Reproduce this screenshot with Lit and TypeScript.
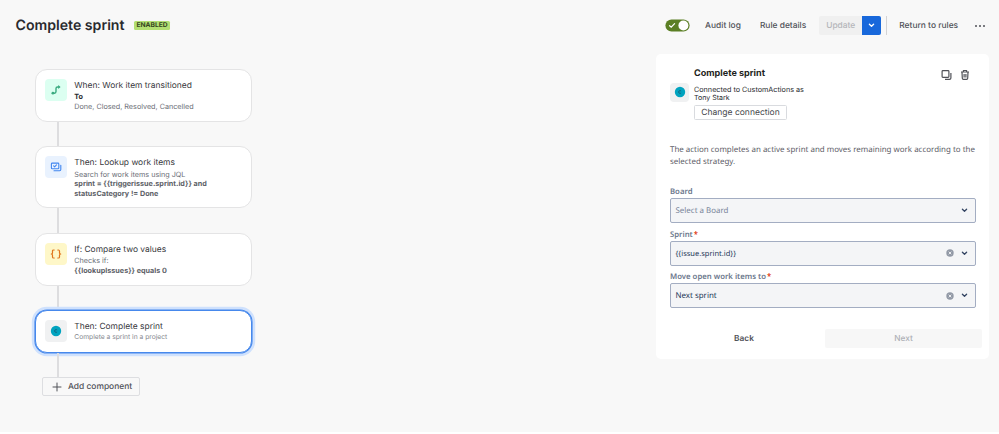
import { LitElement, html, css, svg, nothing, TemplateResult } from "lit";
import { customElement, property } from "lit/decorators.js";
import { classMap } from "lit/directives/class-map.js";

const base = css`
  * { box-sizing: border-box; }
  :host {
    font-family: Inter, "Liberation Sans", sans-serif;
    text-rendering: geometricPrecision;
    color: #292a2e;
  }
  svg { display: block; }
`;

const chevron = (color: string) => html`<svg width="7" height="5" viewBox="0 0 7 5" fill="none" stroke=${color} stroke-width="1.3" stroke-linecap="round" stroke-linejoin="round">${svg`<path d="M1.4 1.2 3.5 3.3 5.6 1.2" />`}</svg>`;

const customIcon = html`<svg width="12" height="12" viewBox="0 0 12 12">
  <circle cx="6" cy="6" r="5.2" fill="#00a3bf" />
  <path d="M7.1 5.1A1.4 1.4 0 1 0 7.1 6.9" fill="none" stroke="#17607a" stroke-width="0.9" />
</svg>`;

const icons: Record<string, TemplateResult> = {
  transition: html`<svg width="12" height="12" viewBox="0 0 12 12" fill="none" stroke="#3bab80" stroke-width="1.4" stroke-linecap="round">
    <path d="M3.2 9.2H4.4Q6 9.2 6 7.6V4.5Q6 3 7.6 3H9" />
    <circle cx="2.9" cy="9.2" r="1.4" fill="#3bab80" stroke="none" />
    <path d="M8.2 1.1 10.6 3 8.2 4.9Z" fill="#3bab80" stroke="none" />
  </svg>`,
  lookup: html`<svg width="12" height="12" viewBox="0 0 12 12" fill="none" stroke="#4186f0" stroke-width="1.1" stroke-linecap="round" stroke-linejoin="round">
    <rect x="1.4" y="2.1" width="7.4" height="5.6" rx="0.8" />
    <path d="M3.6 4.9 4.6 5.8 6.5 3.8M10.8 4.3V8.5Q10.8 9.7 9.6 9.7H4" />
  </svg>`,
  compare: html`<svg width="12" height="12" viewBox="0 0 12 12" fill="none" stroke="#e0751c" stroke-width="1.2" stroke-linecap="round" stroke-linejoin="round">
    <path d="M4.2 2H3.6Q2.5 2 2.5 3.1V4.8Q2.5 6 1.3 6Q2.5 6 2.5 7.2V8.9Q2.5 10 3.6 10H4.2M7.8 2H8.4Q9.5 2 9.5 3.1V4.8Q9.5 6 10.7 6Q9.5 6 9.5 7.2V8.9Q9.5 10 8.4 10H7.8" />
  </svg>`,
  custom: customIcon,
};

@customElement("rule-card")
class RuleCard extends LitElement {
  @property() icon = "custom";
  @property() heading = "";
  @property({ type: Array }) lines: { text: string; kind: string }[] = [];
  @property({ type: Boolean }) selected = false;

  static styles = [base, css`
    :host { display: block; }
    .card {
      display: flex;
      gap: 7px;
      height: 100%;
      padding: 9.2px 9px 0 9.3px;
      background: #fff;
      border: 1px solid #e4e4e5;
      border-radius: 12px;
    }
    .card.selected {
      border-color: #4688ec;
      box-shadow: 0 0 0 0.6px #4688ec, 0 0 0 3.2px #cfe1fd;
    }
    .tile {
      display: grid;
      place-items: center;
      flex: none;
      width: 22px;
      height: 22px;
      border-radius: 4px;
    }
    .transition { background: #dcfff1; }
    .lookup { background: #e9f2fe; }
    .compare { background: #fef7c8; }
    .custom { background: #f0f1f2; }
    .text { padding-top: 0.7px; }
    .heading { margin-bottom: 0.5px; font-size: 8.43px; line-height: 12px; color: #36373b; }
    .line { font-size: 7.23px; line-height: 9.6px; white-space: nowrap; color: #6b6e76; }
    .strong { font-weight: 700; color: #5d5f67; }
    .label { font-weight: 700; color: #292a2e; }
    .small { font-size: 6.69px; color: #85878e; }
  `];

  render() {
    return html`<div class=${classMap({ card: true, selected: this.selected })}>
      <div class="tile ${this.icon}">${icons[this.icon]}</div>
      <div class="text">
        <div class="heading">${this.heading}</div>
        ${this.lines.map((l) => html`<div class="line ${l.kind}">${l.text}</div>`)}
      </div>
    </div>`;
  }
}

@customElement("select-field")
class SelectField extends LitElement {
  @property() label = "";
  @property() value = "";
  @property({ type: Boolean }) required = false;
  @property({ type: Boolean }) placeholder = false;

  static styles = [base, css`
    :host {
      display: block;
      height: 42.5px;
      font-family: "Noto Sans", "Open Sans", sans-serif;
    }
    .label { height: 13px; line-height: 14px; font-size: 7.75px; font-weight: 600; color: #6b778c; white-space: nowrap; }
    .star { margin-left: 1px; color: #de350b; }
    .control {
      display: flex;
      align-items: center;
      gap: 6.5px;
      width: 305.5px;
      height: 25px;
      padding: 0 7px 0 4.5px;
      background: #f4f5f7;
      border: 1px solid #a3adc2;
      border-radius: 2px;
      font-size: 7.93px;
      color: #253858;
    }
    .value { flex: 1; padding-top: 1px; }
    .templated { font-size: 7.5px; }
    .placeholder { color: #7a869a; }
  `];

  render() {
    return html`
      <div class="label">${this.label}${this.required ? html`<span class="star">*</span>` : nothing}</div>
      <div class="control">
        <span class=${classMap({ value: true, placeholder: this.placeholder, templated: this.value.startsWith("{{") })}>${this.value}</span>
        ${this.placeholder ? nothing : html`<svg width="8" height="8" viewBox="0 0 8 8">
          <circle cx="4" cy="4" r="3.7" fill="#9299a6" />
          <path d="M2.7 2.7 5.3 5.3M5.3 2.7 2.7 5.3" stroke="#f4f5f7" stroke-width="0.9" />
        </svg>`}
        ${chevron("#344563")}
      </div>`;
  }
}

@customElement("app-root")
class AppRoot extends LitElement {
  static styles = [base, css`
    :host { display: block; height: 434px; overflow: hidden; background: #fff; }
    .page { height: 432px; background: #f8f8f8; }
    .header {
      display: flex;
      align-items: center;
      height: 51px;
      padding: 0 13.4px 0 15.5px;
      font-size: 8.42px;
      font-weight: 500;
      color: #505258;
      white-space: nowrap;
    }
    .title { font-size: 14.13px; font-weight: 600; color: #292a2e; line-height: 18px; }
    .badge {
      margin: 0 auto 0 9.5px;
      padding: 0 2.4px;
      height: 9.4px;
      line-height: 9.6px;
      border-radius: 1.5px;
      background: #b3df72;
      color: #37471f;
      font-size: 6.7px;
      font-weight: 700;
    }
    .audit { margin-left: 15px; }
    .details { margin-left: 19px; }
    .update {
      display: grid;
      place-items: center;
      width: 43px;
      height: 19px;
      margin-left: 13px;
      background: #f0f0f0;
      color: #b5b6ba;
      border-radius: 2px 0 0 2px;
    }
    .split {
      display: grid;
      place-items: center;
      width: 19px;
      height: 19px;
      background: #1868db;
      border-radius: 0 2px 2px 0;
    }
    .rule { width: 1px; height: 19px; margin: 0 12px 0 5px; background: #d3d3d5; }
    .more { margin-left: 15.5px; }
    .body { display: flex; justify-content: space-between; align-items: flex-start; padding: 0 10px 0 35px; }
    .flow { width: 217px; padding-top: 17.7px; }
    .link { width: 1.5px; margin-left: 22.3px; background: #dddddf; }
    .h1 { height: 53px; } .h2 { height: 62px; } .h3 { height: 53px; } .h4 { height: 43.5px; }
    .l1 { height: 24.5px; } .l2 { height: 24.5px; } .l3 { height: 24px; } .l4 { height: 23.8px; }
    .add {
      display: flex;
      align-items: center;
      gap: 6px;
      width: 97.5px;
      height: 19.5px;
      margin-left: 7.4px;
      padding-left: 8.5px;
      border: 1px solid #dddee1;
      border-radius: 2px;
      font-size: 8.43px;
      font-weight: 500;
      color: #505258;
      white-space: nowrap;
    }
    .panel { width: 333px; height: 305px; margin-top: 3px; padding: 13px 14px 0; background: #fff; border-radius: 5px; }
    .top { display: flex; height: 53px; }
    .tile { display: grid; place-items: center; width: 19px; height: 19px; margin: 15.5px 5px 0 0; border-radius: 4px; background: #f0f1f2; }
    .info { flex: 1; padding-top: 1px; }
    .name { font-size: 9.08px; line-height: 12px; font-weight: 700; color: #1e1f21; }
    .conn { margin-top: 5.5px; font-size: 7.23px; line-height: 8px; color: #292a2e; }
    .who { font-size: 7.05px; line-height: 8px; color: #292a2e; }
    .change {
      display: grid;
      place-items: center;
      width: 93px;
      height: 15px;
      margin-top: 3.2px;
      padding-top: 1px;
      border: 1px solid #d9dbdf;
      border-radius: 1.5px;
      font-size: 8.52px;
      color: #44464b;
    }
    .tools { display: flex; gap: 8px; margin: 2px 5px 0 0; align-self: flex-start; }
    .desc {
      height: 40px;
      margin-top: 25px;
      font: 7.94px/11.6px "Noto Sans", "Open Sans", sans-serif;
      color: #5e6068;
      white-space: nowrap;
    }
    .actions { display: flex; height: 19px; margin: 16.5px -7px 0 -7px; font-size: 8.3px; }
    .back, .next { flex: 1; display: grid; place-items: center; padding-top: 1px; }
    .back { font-weight: 600; color: #505258; }
    .next { flex: none; width: 157px; background: #f7f7f7; color: #aeb0b6; font-weight: 500; border-radius: 2px; }
  `];

  render() {
    return html`<div class="page">
      <div class="header">
        <span class="title">Complete sprint</span>
        <span class="badge">ENABLED</span>
        <svg width="25" height="13" viewBox="0 0 25 13">
          <rect x="0.4" y="0.4" width="24.2" height="12.2" rx="6.1" fill="#5b7f24" />
          <circle cx="18.4" cy="6.5" r="5" fill="#fff" />
          <path d="M4.6 6.7 6.2 8.2 9.6 4.7" fill="none" stroke="#fff" stroke-width="1.2" stroke-linecap="round" />
        </svg>
        <span class="audit">Audit log</span>
        <span class="details">Rule details</span>
        <span class="update">Update</span>
        <span class="split">${chevron("#fff")}</span>
        <span class="rule"></span>
        <span>Return to rules</span>
        <svg class="more" width="12" height="4" viewBox="0 0 12 4" fill="#505258">
          <circle cx="2" cy="2" r="1" /><circle cx="6" cy="2" r="1" /><circle cx="10" cy="2" r="1" />
        </svg>
      </div>
      <div class="body">
        <div class="flow">
          <rule-card class="h1" icon="transition" heading="When: Work item transitioned"
            .lines=${[{ text: "To", kind: "label" }, { text: "Done, Closed, Resolved, Cancelled", kind: "" }]}></rule-card>
          <div class="link l1"></div>
          <rule-card class="h2" icon="lookup" heading="Then: Lookup work items"
            .lines=${[
              { text: "Search for work items using JQL", kind: "" },
              { text: "sprint = {{triggerissue.sprint.id}} and", kind: "strong" },
              { text: "statusCategory != Done", kind: "strong" },
            ]}></rule-card>
          <div class="link l2"></div>
          <rule-card class="h3" icon="compare" heading="If: Compare two values"
            .lines=${[{ text: "Checks if:", kind: "" }, { text: "{{lookupIssues}} equals 0", kind: "strong" }]}></rule-card>
          <div class="link l3"></div>
          <rule-card class="h4" icon="custom" heading="Then: Complete sprint" selected
            .lines=${[{ text: "Complete a sprint in a project", kind: "small" }]}></rule-card>
          <div class="link l4"></div>
          <div class="add">
            <svg width="10" height="10" viewBox="0 0 10 10" fill="none" stroke="#505258" stroke-width="1" stroke-linecap="round"><path d="M5 1V9M1 5H9" /></svg>
            Add component
          </div>
        </div>
        <div class="panel">
          <div class="top">
            <div class="tile">${customIcon}</div>
            <div class="info">
              <div class="name">Complete sprint</div>
              <div class="conn">Connected to CustomActions as</div>
              <div class="who">Tony Stark</div>
              <div class="change">Change connection</div>
            </div>
            <div class="tools">
              <svg width="11" height="12" viewBox="0 0 11 12" fill="none" stroke="#505258" stroke-width="1.2" stroke-linejoin="round">
                <rect x="1.1" y="1.6" width="6.8" height="6.8" rx="0.8" />
                <path d="M9.9 4V9Q9.9 10.4 8.5 10.4H4" />
              </svg>
              <svg width="10" height="12" viewBox="0 0 10 12" fill="none" stroke="#505258" stroke-width="1.2" stroke-linejoin="round">
                <path d="M1 3H9M3.4 2.8V1.5H6.6V2.8M2 3.2 2.3 9.3Q2.4 10.3 3.3 10.3H6.7Q7.6 10.3 7.7 9.3L8 3.2M4.1 5V8.5M5.9 5V8.5" />
              </svg>
            </div>
          </div>
          <div class="desc">The action completes an active sprint and moves remaining work according to the<br />selected strategy.</div>
          <select-field label="Board" value="Select a Board" placeholder></select-field>
          <select-field label="Sprint" value="{{issue.sprint.id}}" required></select-field>
          <select-field label="Move open work items to" value="Next sprint" required></select-field>
          <div class="actions"><span class="back">Back</span><span class="next">Next</span></div>
        </div>
      </div>
    </div>`;
  }
}
